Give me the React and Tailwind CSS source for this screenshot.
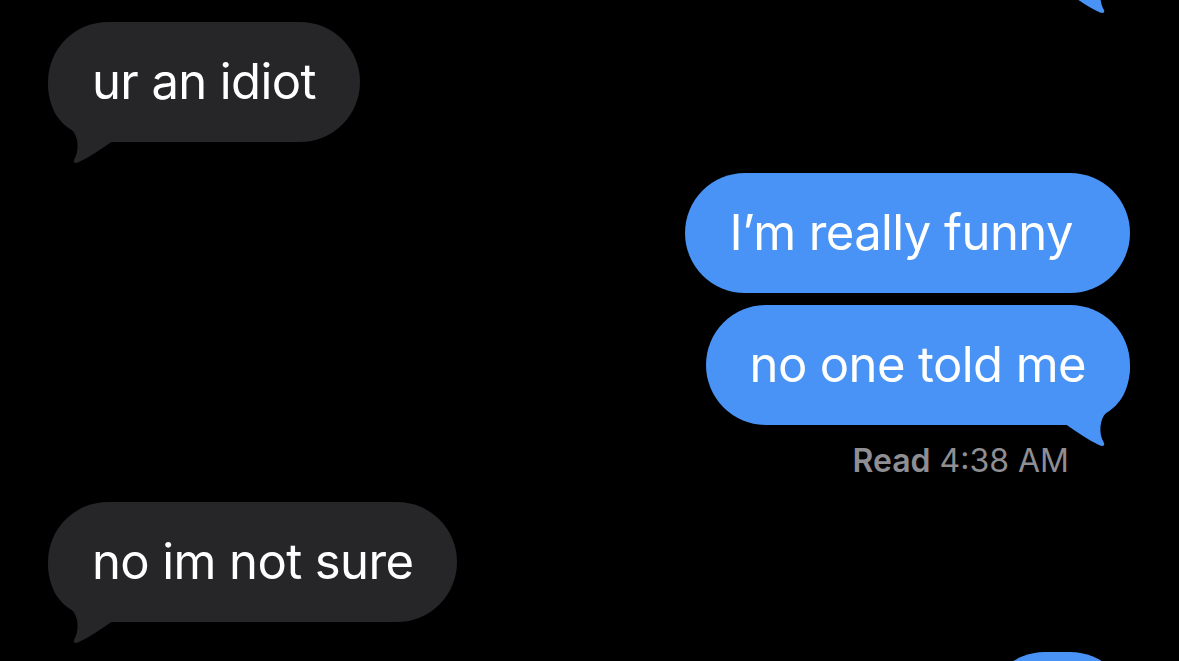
import React from "react";

function Tail({ side, color }) {
  const isRight = side === "right";
  return (
    <svg
      className={
        "pointer-events-none absolute top-[55px] h-[90px] w-[70px] " +
        (isRight ? "right-0 -scale-x-100" : "left-0")
      }
      viewBox="0 55 70 90"
      aria-hidden="true"
    >
      <path
        d="M 0 60 C 0 85 10 100 24 108 C 30 114 32 128 26 138 C 25 140.5 27 141.5 30 140.5 C 42 135 53 127 64 119.5 L 64 100 Z"
        fill={color}
      />
    </svg>
  );
}

const BLUE = "#4893f5";
const GRAY = "#262629";

function Bubble({ side, text, tail, className = "", bodyClass = "" }) {
  const isRight = side === "right";
  const color = isRight ? BLUE : GRAY;
  return (
    <div className={"flex " + (isRight ? "justify-end " : "justify-start ") + className}>
      <div
        className={
          "relative h-[120px] rounded-[60px] px-[44px] py-[30px] text-[49px] leading-[60px] tracking-[-0.6px] text-white whitespace-pre " +
          (isRight ? "bg-[#4893f5] " : "bg-[#262629] ") +
          bodyClass
        }
      >
        {tail && <Tail side={side} color={color} />}
        <span className="relative">{text}</span>
      </div>
    </div>
  );
}

export default function App() {
  return (
    <div
      className="h-[661px] w-[1179px] overflow-hidden bg-black pl-[48px] pr-[49px]"
      style={{ fontFamily: "Inter, 'Noto Sans', sans-serif" }}
    >
      <div className="flex flex-col">
        <Bubble side="right" text="" tail className="mt-[-128px]" bodyClass="w-[320px]" />
        <Bubble side="left" text="ur an idiot" tail className="mt-[30px]" />
        <Bubble side="right" text={"I\u2019m really funny\u00a0"} className="mt-[31px]" />
        <Bubble side="right" text="no one told me" tail className="mt-[12px]" />
        <div className="mt-[16px] flex justify-end pr-[61px] text-[32px] leading-[39px] text-[#8e8e93]">
          <span>
            <span className="font-semibold">Read</span> 4:38 AM
          </span>
        </div>
        <Bubble side="left" text="no im not sure" tail className="mt-[22px]" />
        <Bubble side="right" text="" className="mt-[30px]" bodyClass="w-[145px]" />
      </div>
    </div>
  );
}
